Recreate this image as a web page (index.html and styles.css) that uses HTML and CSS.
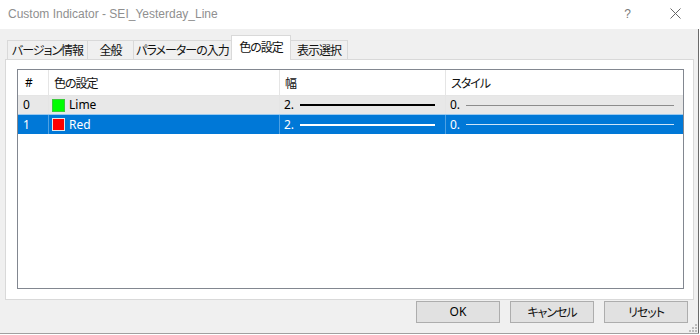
FILE: index.html
```html
<!DOCTYPE html>
<html lang="ja">
<head>
<meta charset="utf-8">
<title>Custom Indicator</title>
<link rel="stylesheet" href="styles.css">
</head>
<body>
<div class="window">
  <div class="titlebar">
    <span class="title">Custom Indicator - SEI_Yesterday_Line</span>
    <div class="controls">
      <span class="help">?</span>
      <svg class="close" width="11" height="11" viewBox="0 0 11 11"><path d="M0.5 0.5L10.5 10.5M10.5 0.5L0.5 10.5" stroke="#666" stroke-width="1" fill="none"/></svg>
    </div>
  </div>
  <div class="body">
    <div class="tabs">
      <div class="tab t1 jp">バージョン情報</div>
      <div class="tab t2 jp">全般</div>
      <div class="tab t3 jp">パラメーターの入力</div>
      <div class="tab t4 jp active">色の設定</div>
      <div class="tab t5 jp">表示選択</div>
    </div>
    <div class="panel">
      <div class="list">
        <div class="row header">
          <div class="cell c0">#</div>
          <div class="cell c1 jp">色の設定</div>
          <div class="cell c2 jp">幅</div>
          <div class="cell c3 jp">スタイル</div>
        </div>
        <div class="row item hover">
          <div class="cell c0">0</div>
          <div class="cell c1"><span class="swatch lime"></span><span>Lime</span></div>
          <div class="cell c2"><span>2.</span><span class="line thick"></span></div>
          <div class="cell c3"><span>0.</span><span class="line thin"></span></div>
        </div>
        <div class="row item selected">
          <div class="cell c0">1</div>
          <div class="cell c1"><span class="swatch red"></span><span>Red</span></div>
          <div class="cell c2"><span>2.</span><span class="line thick"></span></div>
          <div class="cell c3"><span>0.</span><span class="line thin"></span></div>
        </div>
      </div>
    </div>
    <div class="buttons">
      <div class="btn">OK</div>
      <div class="btn jp">キャンセル</div>
      <div class="btn jp">リセット</div>
    </div>
    <svg class="grip" width="8" height="8" viewBox="0 0 8 8">
      <rect x="6" y="0" width="2" height="2" fill="#bdbdbd"/>
      <rect x="3" y="3" width="2" height="2" fill="#bdbdbd"/>
      <rect x="6" y="3" width="2" height="2" fill="#bdbdbd"/>
      <rect x="0" y="6" width="2" height="2" fill="#bdbdbd"/>
      <rect x="3" y="6" width="2" height="2" fill="#bdbdbd"/>
      <rect x="6" y="6" width="2" height="2" fill="#bdbdbd"/>
    </svg>
  </div>
</div>
</body>
</html>
```

FILE: styles.css
```css
* { box-sizing: border-box; }
html, body {
  margin: 0;
  padding: 0;
  background: #ffffff;
}
body {
  width: 700px;
  height: 335px;
  overflow: hidden;
  font-family: "Noto Sans", "Noto Sans CJK JP", sans-serif;
  font-size: 12px;
  color: #000;
}
.jp {
  font-family: "Noto Sans CJK JP", sans-serif;
  font-feature-settings: "palt";
  letter-spacing: -1px;
  color: #111;
}
.window {
  width: 699px;
  height: 334px;
  display: flex;
  flex-direction: column;
  background: #f0f0f0;
  border-bottom: 1px solid #a0a0a0;
}
.titlebar {
  height: 29px;
  flex: none;
  background: #ffffff;
  display: flex;
  align-items: center;
  padding-left: 8px;
}
.title {
  font-family: "Liberation Sans", sans-serif;
  color: #8f8f8f;
  font-size: 12px;
  line-height: 16px;
  margin-top: -2px;
}
.controls {
  margin-left: auto;
  display: flex;
  align-items: center;
  margin-top: -2px;
}
.help {
  font-family: "Liberation Sans", sans-serif;
  color: #7a7a7a;
  font-size: 12px;
  line-height: 14px;
  margin-right: 39px;
}
.close {
  display: block;
  margin-right: 18px;
}
.body {
  flex: 1;
  position: relative;
  display: flex;
  flex-direction: column;
  border-right: 1px solid #6a6a6a;
}
.tabs {
  display: flex;
  align-items: flex-end;
  height: 24px;
  margin-top: 6px;
  padding-left: 7px;
  position: relative;
  z-index: 1;
}
.tab {
  height: 19px;
  border: 1px solid #d9d9d9;
  border-bottom: none;
  border-right: none;
  background: #f0f0f0;
  display: flex;
  align-items: center;
  justify-content: center;
  line-height: 16px;
  white-space: nowrap;
}
.t1 { width: 80px; }
.t2 { width: 46px; }
.t3 { width: 98px; }
.t4 { width: 60px; }
.t5 { width: 57px; border-right: 1px solid #d9d9d9; }
.tab.active {
  height: 25px;
  margin-bottom: -1px;
  background: #ffffff;
  border-right: 1px solid #d9d9d9;
  padding-bottom: 2px;
}
.tab.active + .tab { border-left: none; }
.panel {
  margin-left: 5px;
  width: 689px;
  height: 241px;
  background: #ffffff;
  border: 1px solid #d9d9d9;
  padding: 9px 9px 10px 11px;
}
.list {
  width: 667px;
  height: 220px;
  border: 1px solid #828790;
  background: #ffffff;
}
.row {
  display: grid;
  grid-template-columns: 31px 231px 166px 237px;
}
.cell {
  display: flex;
  align-items: center;
  border-right: 1px solid #e5e5e5;
  white-space: nowrap;
  line-height: 16px;
}
.cell.c3 { border-right: none; }
.header {
  height: 26px;
  border-bottom: 1px solid #e5e5e5;
}
.header .cell { padding-left: 5px; }
.header .c0 { padding-left: 7px; }
.item { height: 19px; }
.item .c0 { padding-left: 5px; }
.item .c1 { padding-left: 3px; }
.item .c2 { padding-left: 4px; }
.item .c3 { padding-left: 4px; }
.hover { background: #e8e8e8; height: 18px; }
.selected {
  background: #0078d7;
  color: #ffffff;
  border-top: 1px solid #99c9ef;
  height: 20px;
}
.selected .cell { border-right-color: #4ea1e3; }
.swatch {
  width: 13px;
  height: 13px;
  margin-right: 4px;
  flex: none;
}
.swatch.lime { background: #00ff00; border: 1px solid #3cc83c; }
.swatch.red { background: #ff0000; border: 1px solid #e6e6e6; }
.line {
  flex: 1;
  display: block;
}
.line.thick {
  height: 2px;
  background: #000000;
  margin-left: 6px;
  margin-right: 10px;
}
.line.thin {
  height: 1px;
  background: #8c8c8c;
  margin-left: 6px;
  margin-right: 9px;
}
.selected .line.thick { background: #ffffff; }
.selected .line.thin { background: #cfe4f7; }
.buttons {
  display: flex;
  justify-content: flex-end;
  gap: 10px;
  margin-top: 1px;
  padding-right: 10px;
}
.btn {
  width: 84px;
  height: 22px;
  border: 1px solid #adadad;
  background: #e1e1e1;
  display: flex;
  align-items: center;
  justify-content: center;
  line-height: 16px;
}
.grip {
  position: absolute;
  right: 1px;
  bottom: 1px;
}
```
